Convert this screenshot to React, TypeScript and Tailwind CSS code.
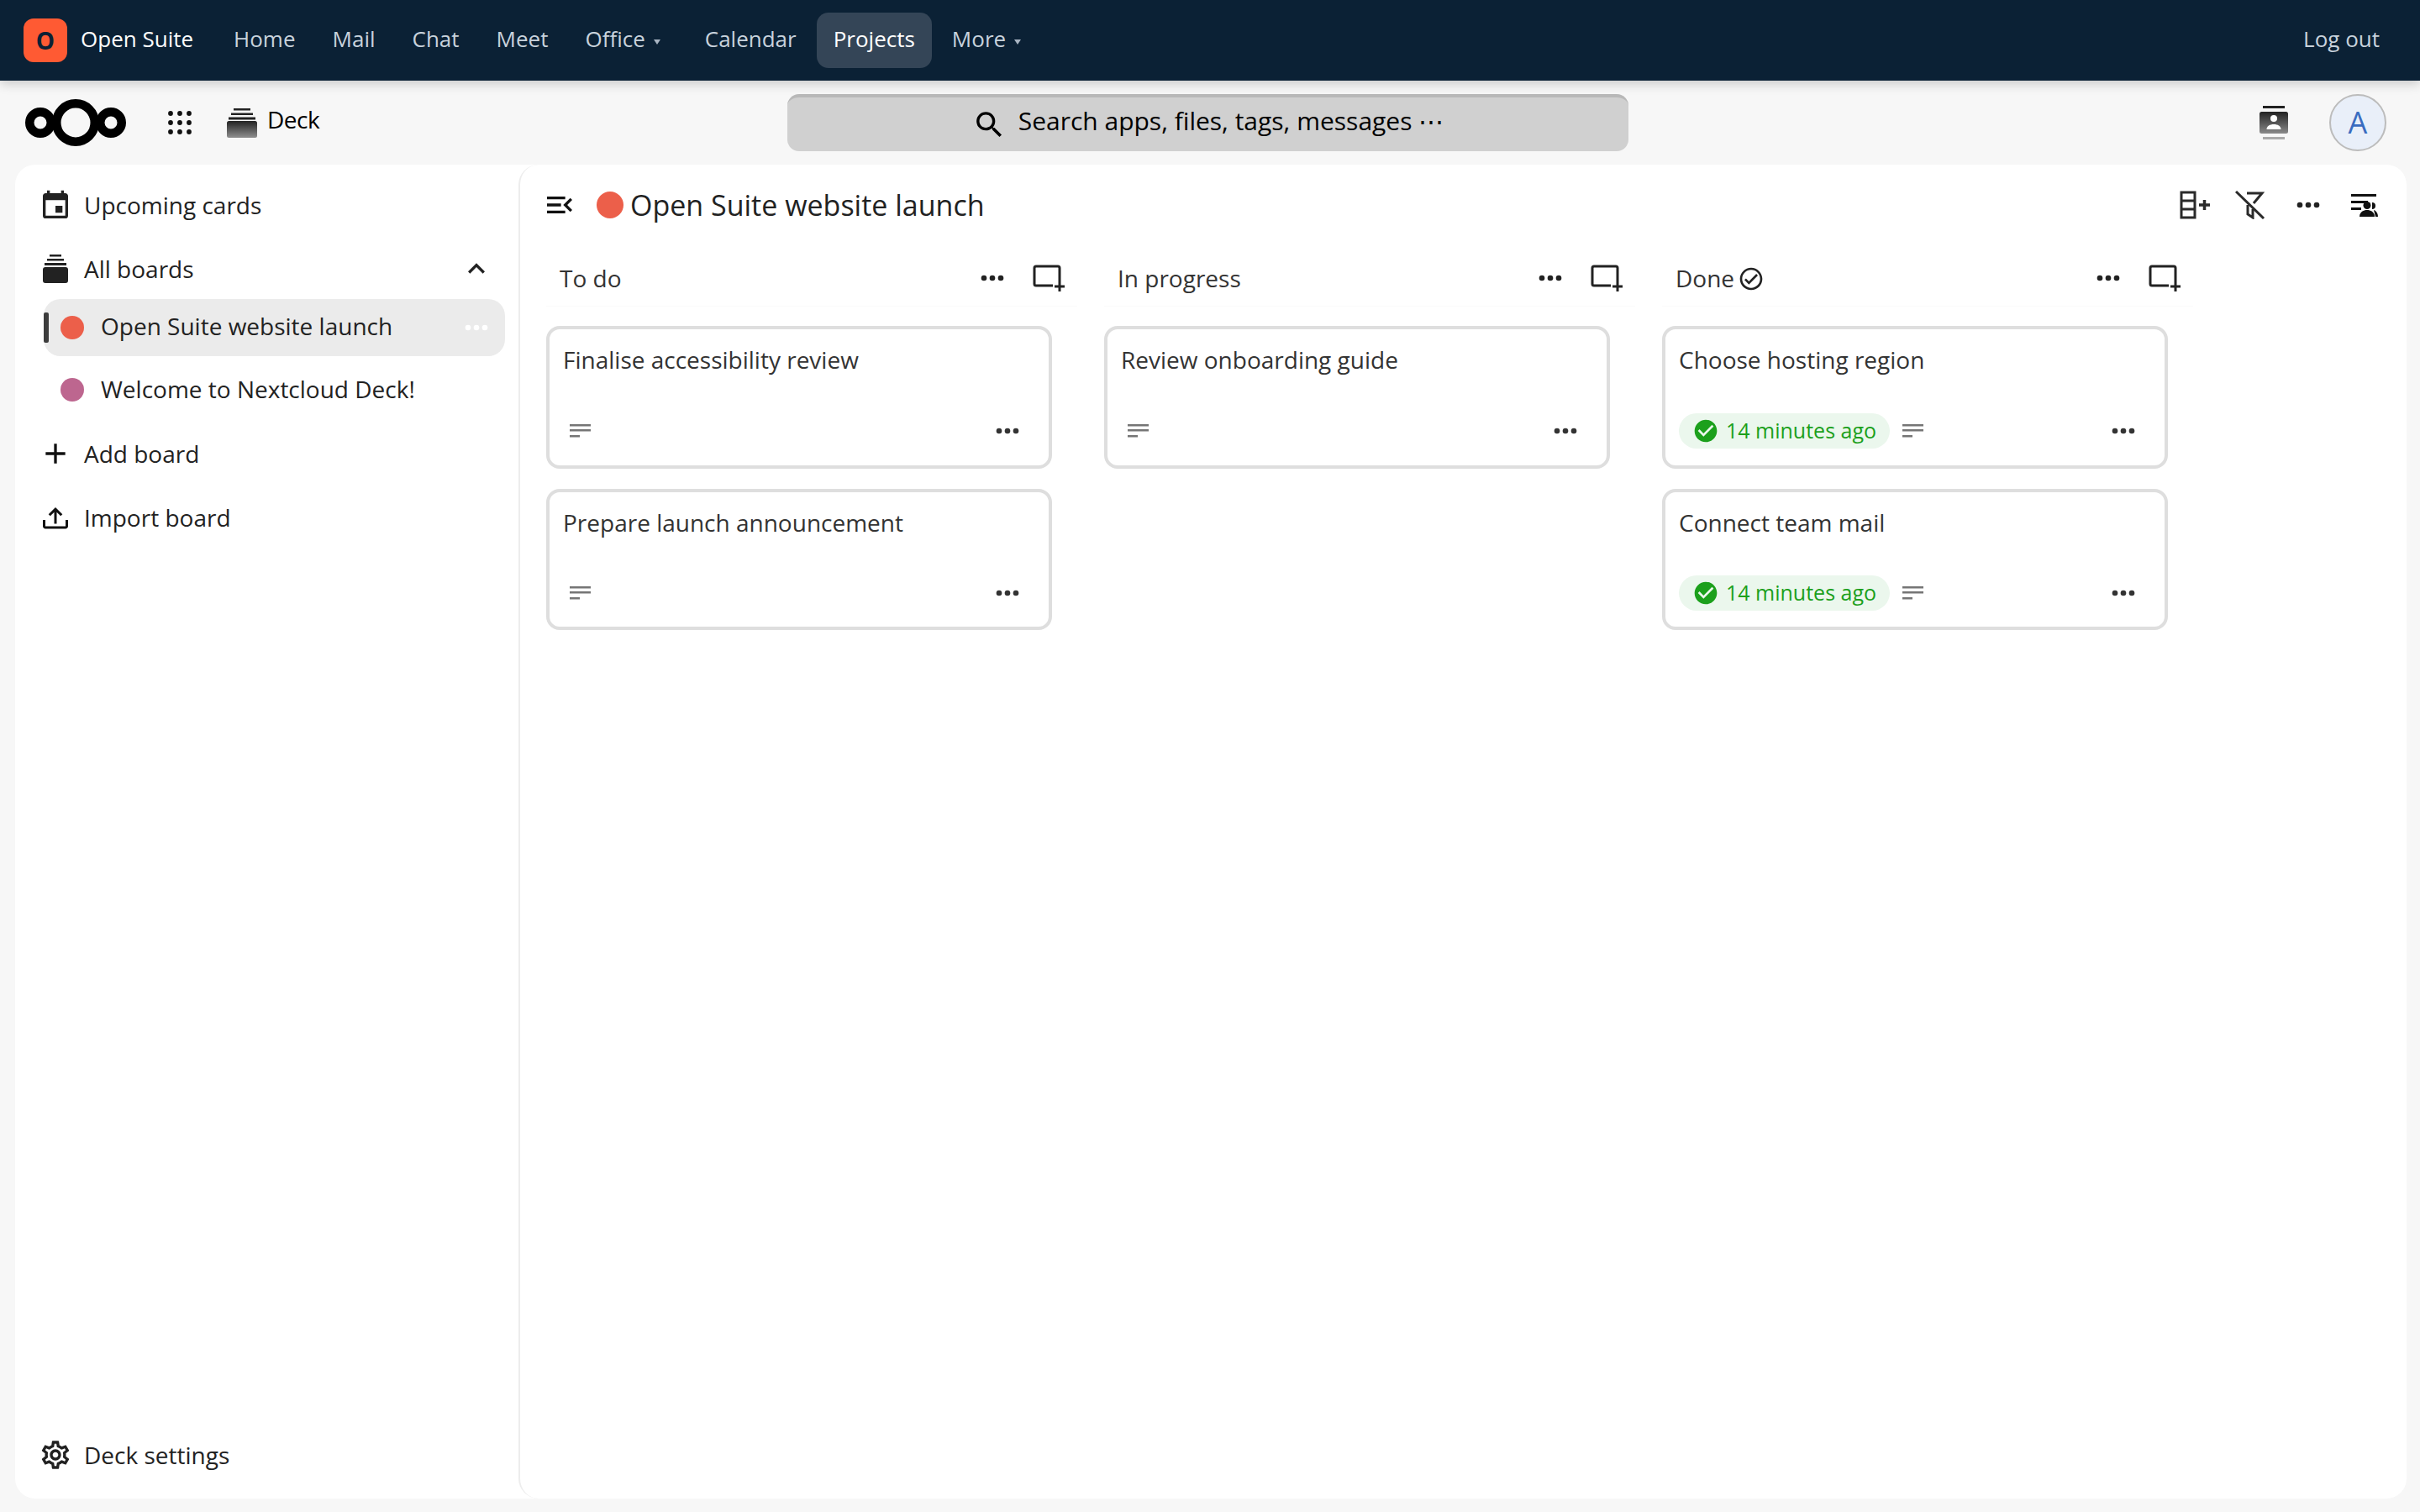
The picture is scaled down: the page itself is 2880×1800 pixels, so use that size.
import { MdOutlineSettings } from 'react-icons/md'

const DOTS =
    'M16,12A2,2 0 0,1 18,10A2,2 0 0,1 20,12A2,2 0 0,1 18,14A2,2 0 0,1 16,12M10,12A2,2 0 0,1 12,10A2,2 0 0,1 14,12A2,2 0 0,1 12,14A2,2 0 0,1 10,12M4,12A2,2 0 0,1 6,10A2,2 0 0,1 8,12A2,2 0 0,1 6,14A2,2 0 0,1 4,12Z'
const CHECK_CIRCLE =
    'M12 2C6.5 2 2 6.5 2 12S6.5 22 12 22 22 17.5 22 12 17.5 2 12 2M10 17L5 12L6.41 10.59L10 14.17L17.59 6.58L19 8L10 17Z'

function Mdi({ d, className }: { d: string; className?: string }) {
    return (
        <svg viewBox="0 0 24 24" fill="currentColor" className={className}>
            <path d={d} />
        </svg>
    )
}

function Dots({ className }: { className?: string }) {
    return <Mdi d={DOTS} className={className} />
}

function Caret() {
    return <span className="ml-[10px] mr-[9px] mt-[3px] w-0 h-0 border-x-[4px] border-x-transparent border-t-[6px] border-t-[#a9b5c2]" />
}

function NavLink({ label, active, caret }: { label: string; active?: boolean; caret?: boolean }) {
    return (
        <div
            className={
                active
                    ? 'h-[66px] px-5 flex items-center rounded-[14px] bg-[#344557] text-white'
                    : 'h-[66px] px-5 flex items-center text-[#c8d2dc]'
            }
        >
            <span className="mb-[3px]">{label}</span>
            {caret && <Caret />}
        </div>
    )
}

function TopBar() {
    return (
        <header className="h-24 shrink-0 flex items-center bg-[#0b2135] pl-7 pr-[48px] text-[26px] shadow-[0_4px_12px_rgba(0,0,0,0.18)] relative z-10">
            <div className="w-[52px] h-[52px] rounded-[12px] bg-[#ff5a33] flex items-center justify-center text-[#0b2135] font-bold text-[28px]">
                O
            </div>
            <span className="ml-4 mb-[3px] text-white">Open Suite</span>
            <nav className="ml-7 flex items-center gap-1">
                <NavLink label="Home" />
                <NavLink label="Mail" />
                <NavLink label="Chat" />
                <NavLink label="Meet" />
                <NavLink label="Office" caret />
                <NavLink label="Calendar" />
                <NavLink label="Projects" active />
                <NavLink label="More" caret />
            </nav>
            <span className="ml-auto mb-[3px] text-[#c8d2dc]">Log out</span>
        </header>
    )
}

function CloudLogo() {
    return (
        <svg viewBox="0 0 120 56" className="w-[120px] h-[56px]" fill="none" stroke="#000" strokeWidth="10.5">
            <circle cx="18" cy="28" r="12.75" />
            <circle cx="60" cy="28" r="22.75" />
            <circle cx="102" cy="28" r="12.75" />
        </svg>
    )
}

function AppsGrid() {
    const spots = [3, 14, 25]
    return (
        <svg viewBox="0 0 28 28" className="w-7 h-7" fill="#111">
            {spots.map((y) => spots.map((x) => <circle key={`${x}-${y}`} cx={x} cy={y} r="2.9" />))}
        </svg>
    )
}

function DeckIcon() {
    return (
        <svg viewBox="0 0 36 36" className="w-9 h-9">
            <defs>
                <linearGradient id="deckFade" x1="0" y1="0" x2="0" y2="1">
                    <stop offset="0" stopColor="#222" />
                    <stop offset="1" stopColor="#909090" />
                </linearGradient>
            </defs>
            <rect x="8" y="1" width="20" height="2.5" fill="#222" />
            <rect x="5" y="6.5" width="26" height="2.5" fill="#222" />
            <rect x="2" y="11.5" width="32" height="3" fill="#222" />
            <rect x="0" y="16" width="36" height="20" rx="2.5" fill="url(#deckFade)" />
        </svg>
    )
}

function ContactsIcon() {
    return (
        <svg viewBox="0 0 34 40" className="w-[34px] h-10">
            <defs>
                <linearGradient id="contactFade" x1="0" y1="0" x2="0" y2="1">
                    <stop offset="0" stopColor="#222" />
                    <stop offset="1" stopColor="#8a8a8a" />
                </linearGradient>
            </defs>
            <rect x="4" y="0" width="26" height="3" fill="#222" />
            <rect x="0" y="7" width="34" height="26" rx="2.5" fill="url(#contactFade)" />
            <circle cx="17" cy="15" r="4" fill="#fff" />
            <path d="M8.5 28c0-4 4-6 8.5-6s8.5 2 8.5 6z" fill="#fff" />
            <rect x="4" y="37" width="26" height="3" fill="#aaa" />
        </svg>
    )
}

function SubHeader() {
    return (
        <div className="h-[100px] shrink-0 flex items-center">
            <div className="w-[937px] shrink-0 flex items-center pl-[30px]">
                <CloudLogo />
                <div className="ml-[50px]">
                    <AppsGrid />
                </div>
                <div className="ml-[42px]">
                    <DeckIcon />
                </div>
                <span className="ml-3 text-[28px] text-black tracking-[-0.5px] mb-[8px]">Deck</span>
            </div>
            <div className="w-[1001px] h-[68px] shrink-0 flex items-center justify-center gap-[14px] rounded-[14px] bg-[#d0d0d0] border-t-4 border-[#b8b8b8] text-[30px] text-black">
                <Mdi
                    d="M9.5,3A6.5,6.5 0 0,1 16,9.5C16,11.11 15.41,12.59 14.44,13.73L14.71,14H15.5L20.5,19L19,20.5L14,15.5V14.71L13.73,14.44C12.59,15.41 11.11,16 9.5,16A6.5,6.5 0 0,1 3,9.5A6.5,6.5 0 0,1 9.5,3M9.5,5C7,5 5,7 5,9.5C5,12 7,14 9.5,14C12,14 14,12 14,9.5C14,7 12,5 9.5,5Z"
                    className="w-[41px] h-[41px]"
                />
                <span className="mb-[9px]">Search apps, files, tags, messages ⋯</span>
            </div>
            <div className="flex-1 flex items-center justify-end pr-[40px]">
                <ContactsIcon />
                <div className="ml-[49px] w-[68px] h-[68px] rounded-full border-2 border-[#bcbcbc] bg-[#e9eff9] flex items-center justify-center text-[36px] text-[#3a6cc0]">
                    A
                </div>
            </div>
        </div>
    )
}

function NavRow({ icon, label, right }: { icon: React.ReactNode; label: string; right?: React.ReactNode }) {
    return (
        <div className="h-[68px] flex items-center pl-[33px] pr-[30px] text-[28px] text-[#222]">
            <span className="w-[49px] shrink-0 flex items-center">{icon}</span>
            <span>{label}</span>
            {right && <span className="ml-auto">{right}</span>}
        </div>
    )
}

function StackIcon() {
    return (
        <svg viewBox="0 0 30 34" className="w-[30px] h-[34px]" fill="#222">
            <rect x="8" y="0" width="14" height="2.5" />
            <rect x="5" y="5" width="20" height="2.5" />
            <rect x="2" y="10" width="26" height="3" />
            <rect x="0" y="15" width="30" height="19" rx="3" />
        </svg>
    )
}

function Sidebar() {
    return (
        <aside className="w-[599px] shrink-0 flex flex-col pt-[14px] pb-[18px]">
            <NavRow
                label="Upcoming cards"
                icon={
                    <Mdi
                        d="M19 19H5V8H19M16 1V3H8V1H6V3H5C3.89 3 3 3.89 3 5V19A2 2 0 0 0 5 21H19A2 2 0 0 0 21 19V5C21 3.89 20.1 3 19 3H18V1M17 12H12V17H17V12Z"
                        className="w-10 h-10 -ml-[5px] mt-[2px] text-[#222]"
                    />
                }
            />
            <div className="mt-2">
                <NavRow
                    label="All boards"
                    icon={<StackIcon />}
                    right={<Mdi d="M7.41,15.41L12,10.83L16.59,15.41L18,14L12,8L6,14L7.41,15.41Z" className="w-10 h-10 text-[#222]" />}
                />
            </div>
            <div className="mt-[2px] ml-[34px] mr-[16px] h-[68px] rounded-[20px] bg-[#ebebeb] flex items-center text-[28px] text-[#222]">
                <span className="w-[6px] h-9 rounded-[2px] bg-[#3d3d3d]" />
                <span className="ml-[14px] w-7 h-7 rounded-full bg-[#ec5f4a]" />
                <span className="ml-5 mb-[5px]">Open Suite website launch</span>
                <Dots className="ml-auto mr-[14px] w-10 h-10 text-white" />
            </div>
            <div className="mt-[6px] ml-[34px] h-[68px] flex items-center text-[28px] text-[#222]">
                <span className="ml-5 w-7 h-7 rounded-full bg-[#bd668f]" />
                <span className="ml-5 mb-[3px]">Welcome to Nextcloud Deck!</span>
            </div>
            <div className="mt-2">
                <NavRow label="Add board" icon={<Mdi d="M19,13H13V19H11V13H5V11H11V5H13V11H19V13Z" className="w-10 h-10 -ml-[5px] text-[#111]" />} />
            </div>
            <div className="mt-2">
                <NavRow
                    label="Import board"
                    icon={
                        <Mdi
                            d="M2 12H4V17H20V12H22V17C22 18.11 21.11 19 20 19H4C2.9 19 2 18.11 2 17V12M12 2L6.46 7.46L7.88 8.88L11 5.75V15H13V5.75L16.13 8.89L17.55 7.46L12 2Z"
                            className="w-9 h-9 -ml-[3px] mt-[5px] text-[#111]"
                        />
                    }
                />
            </div>
            <div className="mt-auto">
                <NavRow label="Deck settings" icon={<MdOutlineSettings className="w-10 h-10 -ml-[5px] text-[#222]" />} />
            </div>
        </aside>
    )
}

function CardPlus() {
    return (
        <svg viewBox="0 0 38 32" className="w-[38px] h-8" fill="none" stroke="#222">
            <path d="M24 25H4a2 2 0 0 1-2-2V4a2 2 0 0 1 2-2h26a2 2 0 0 1 2 2v16" strokeWidth="3" />
            <path d="M32 20v12M26 26h12" strokeWidth="3" />
        </svg>
    )
}

function DescIcon() {
    return (
        <svg viewBox="0 0 25 16" className="w-[25px] h-4 shrink-0" fill="#757575">
            <rect width="25" height="2.5" />
            <rect y="6" width="25" height="2.5" />
            <rect y="13" width="12" height="2.5" />
        </svg>
    )
}

type CardData = { title: string; done?: boolean; tall?: boolean }

function Card({ title, done, tall }: CardData) {
    return (
        <div
            className={`w-[602px] ${tall ? 'h-[170px]' : 'h-[168px]'} flex flex-col rounded-[16px] border-4 border-[#dedede] bg-white px-4 text-[28px] text-[#333]`}
        >
            <div className="mt-[17px] leading-[38px]">{title}</div>
            <div className={`mt-auto ${tall ? 'mb-[19px]' : 'mb-[18px]'} flex items-center h-[44px]`}>
                {done && (
                    <div className="h-[42px] w-[251px] shrink-0 rounded-full bg-[#ebf7ed] flex items-center pl-[18px] text-[25px] text-[#1ca01c]">
                        <Mdi d={CHECK_CIRCLE} className="w-8 h-8 -ml-[2px]" />
                        <span className="ml-[8px]">14 minutes ago</span>
                    </div>
                )}
                <div className={done ? 'ml-[15px]' : 'ml-2'}>
                    <DescIcon />
                </div>
                <Dots className="ml-auto mr-[13px] w-10 h-10 text-[#333]" />
            </div>
        </div>
    )
}

function Column({ title, done, cards }: { title: string; done?: boolean; cards: CardData[] }) {
    return (
        <section className="w-[632px] shrink-0">
            <div className="h-[68px] flex items-center pl-[16px] text-[28px] text-[#333] border-b border-[#fbfbfb]">
                <span>{title}</span>
                {done && (
                    <Mdi
                        d="M12 2C6.5 2 2 6.5 2 12S6.5 22 12 22 22 17.5 22 12 17.5 2 12 2M12 20C7.59 20 4 16.41 4 12S7.59 4 12 4 20 7.59 20 12 16.41 20 12 20M16.59 7.58L10 14.17L7.41 11.59L6 13L10 17L18 9L16.59 7.58Z"
                        className="ml-[4px] mt-[2px] w-8 h-8 text-[#222]"
                    />
                )}
                <Dots className="ml-auto w-10 h-10 text-[#222]" />
                <div className="ml-[28px] mr-[15px]">
                    <CardPlus />
                </div>
            </div>
            <div className="mt-[23px] flex flex-col gap-[24px]">
                {cards.map((c) => (
                    <Card key={c.title} {...c} />
                ))}
            </div>
        </section>
    )
}

function BoardToolbar() {
    return (
        <div className="h-[72px] flex items-center pl-[31px] pr-[34px]">
            <Mdi
                d="M21,15.61L19.59,17L14.58,12L19.59,7L21,8.39L17.44,12L21,15.61M3,6H16V8H3V6M3,13V11H13V13H3M3,18V16H16V18H3Z"
                className="w-10 h-10 -ml-[4px] text-[#111]"
            />
            <span className="ml-[24px] w-8 h-8 rounded-full bg-[#ec5f4a]" />
            <span className="ml-2 text-[34px] text-[#222]">Open Suite website launch</span>
            <div className="ml-auto flex items-center">
                <svg viewBox="0 0 36 34" className="w-9 h-[34px]" fill="none" stroke="#2a2a2a" strokeWidth="3">
                    <path d="M2 2h16v30H2zM2 12h16M2 22h16" />
                    <path d="M23 17h13M29.5 11v12" strokeWidth="3.5" />
                </svg>
                <svg viewBox="0 0 36 34" className="ml-[30px] w-9 h-[34px]" fill="none" stroke="#2a2a2a" strokeWidth="3">
                    <path d="M14 3h18L22 15M15 17v11l6 4V22" />
                    <path d="M1 1l33 32" />
                </svg>
                <Dots className="ml-[31px] w-10 h-10 text-[#222]" />
                <svg viewBox="0 0 32 28" className="ml-[31px] w-8 h-7 mt-[2px]" fill="#111">
                    <rect width="30" height="3" />
                    <rect y="8" width="20" height="3" />
                    <rect y="16" width="12" height="3" />
                    <circle cx="19" cy="13.5" r="4.5" />
                    <path d="M10 27c0-5 4-8 9-8s9 3 9 8z" />
                    <path d="M25 10a4 4 0 0 1 0 8M27 19c3 1 5 4 5 8h-3" />
                </svg>
            </div>
        </div>
    )
}

export default function App() {
    const todo: CardData[] = [{ title: 'Finalise accessibility review', tall: true }, { title: 'Prepare launch announcement' }]
    const doing: CardData[] = [{ title: 'Review onboarding guide', tall: true }]
    const done: CardData[] = [
        { title: 'Choose hosting region', done: true, tall: true },
        { title: 'Connect team mail', done: true },
    ]
    return (
        <div className="w-[2880px] h-[1800px] flex flex-col bg-[#f7f7f7] font-['Open_Sans',sans-serif] overflow-hidden">
            <TopBar />
            <SubHeader />
            <div className="ml-[18px] mr-4 h-[1588px] flex rounded-[24px] bg-white">
                <Sidebar />
                <main className="flex-1 rounded-[24px] border-l-2 border-[#ededed] pt-3">
                    <BoardToolbar />
                    <div className="mt-[17px] pl-[31px] flex gap-[32px]">
                        <Column title="To do" cards={todo} />
                        <Column title="In progress" cards={doing} />
                        <Column title="Done" done cards={done} />
                    </div>
                </main>
            </div>
        </div>
    )
}
